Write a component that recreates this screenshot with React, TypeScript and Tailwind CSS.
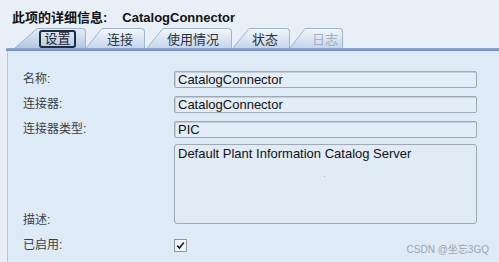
import React from 'react';

const cjk = { fontFamily: '"Liberation Sans", "Noto Sans CJK SC", sans-serif' };

type TabProps = {
  label: string;
  slope: number;
  body: number;
  pad: number;
  active?: boolean;
  disabled?: boolean;
  gap?: number;
};

function Slope({ w, active }: { w: number; active?: boolean }) {
  const id = active ? 'tabA' : 'tabI';
  return (
    <svg width={w} height="20" viewBox={`0 0 ${w} 20`} className="block shrink-0">
      <defs>
        <linearGradient id={id} x1="0" y1="0" x2="0" y2="1">
          <stop offset="0" stopColor={active ? '#e4edf7' : '#f2f6fb'} />
          <stop offset="1" stopColor={active ? '#b3c9e2' : '#c6d6e9'} />
        </linearGradient>
      </defs>
      <polygon points={`0,20 ${w},0 ${w},20`} fill={`url(#${id})`} />
      <line x1="0" y1="20" x2={w} y2="0.5" stroke="#9fb4cd" strokeWidth="1" />
    </svg>
  );
}

function Tab({ label, slope, body, pad, active, disabled, gap = 0 }: TabProps) {
  return (
    <div className="flex items-end" style={{ marginLeft: gap }}>
      <Slope w={slope} active={active} />
      <div
        className={
          'h-[20px] border-t border-r border-[#9fb4cd] rounded-tr-[4px] ' +
          (active
            ? 'bg-gradient-to-b from-[#e4edf7] to-[#b3c9e2]'
            : 'bg-gradient-to-b from-[#f2f6fb] to-[#c6d6e9]')
        }
        style={{ width: body }}
      >
        {active ? (
          <div className="mt-[1px] ml-[2px] w-[37px] h-[18px] border-2 border-[#1f2c3d] rounded-[3px] flex items-center justify-center text-[13px] leading-[14px] text-[#1b2330]">
            {label}
          </div>
        ) : (
          <div
            className={
              'pt-[3px] text-[13px] leading-[16px] ' +
              (disabled ? 'text-[#a3afbd]' : 'text-[#2b3442]')
            }
            style={{ paddingLeft: pad }}
          >
            {label}
          </div>
        )}
      </div>
    </div>
  );
}

function Field({ value }: { value: string }) {
  return (
    <div className="w-[303px] h-[17px] border border-[#9ea9b6] rounded-[2px] bg-[#e3edf7] shadow-[inset_1px_1px_0_#c4ced9] pl-[3px] text-[13px] leading-[15px] text-[#111]">
      {value}
    </div>
  );
}

export default function App() {
  return (
    <div className="w-[499px] h-[262px] overflow-hidden bg-[#e8eff7] flex flex-col" style={cjk}>
      <div className="pt-[10px] pl-[12px] text-[13px] leading-[16px] font-bold text-[#111]">
        此项的详细信息:<span className="ml-[15px]">CatalogConnector</span>
      </div>

      <div className="mt-[2px] pl-[15px] flex items-end h-[20px]">
        <Tab label="设置" slope={22} body={49} pad={0} active />
        <Tab label="连接" slope={16} body={43} pad={5} />
        <Tab label="使用情况" slope={16} body={69} pad={4} gap={2} />
        <Tab label="状态" slope={16} body={41} pad={3} gap={1} />
        <Tab label="日志" slope={15} body={38} pad={7} disabled />
      </div>

      <div className="ml-[6px] h-[3px] bg-gradient-to-b from-[#94addb] to-[#6d8fc2]" />

      <div className="ml-[7px] flex-1 border-l border-[#b6c7d9] bg-[#deeaf5] pl-[15px] pt-[20px] relative">
        <div className="flex flex-col gap-[8px]">
          <div className="flex items-center">
            <div className="w-[151px] text-[12px] leading-[17px] text-[#3a3f46]">名称:</div>
            <Field value="CatalogConnector" />
          </div>
          <div className="flex items-center">
            <div className="w-[151px] text-[12px] leading-[17px] text-[#3a3f46]">连接器:</div>
            <Field value="CatalogConnector" />
          </div>
          <div className="flex items-center">
            <div className="w-[151px] text-[12px] leading-[17px] text-[#3a3f46]">连接器类型:</div>
            <Field value="PIC" />
          </div>
        </div>

        <div className="mt-[6px] flex items-end">
          <div className="w-[151px] text-[12px] leading-[14px] mb-[-3px] text-[#3a3f46]">描述:</div>
          <div className="w-[303px] h-[80px] border border-[#9ea9b6] rounded-[3px] bg-[#e1ebf6] pl-[3px] pt-[1px] text-[13px] leading-[16px] text-[#111] relative">
            Default Plant Information Catalog Server
            <span className="absolute left-[149px] top-[31px] w-[1px] h-[1px] bg-[#aab4c0]" />
          </div>
        </div>

        <div className="mt-[15px] flex items-center">
          <div className="w-[151px] text-[12px] leading-[13px] text-[#3a3f46]">已启用:</div>
          <div className="w-[13px] h-[13px] border border-[#8c97a4] bg-[#f2f6fa] flex items-center justify-center">
            <svg width="9" height="9" viewBox="0 0 9 9">
              <path d="M1.2 4.6 L3.5 7 L7.8 1.5" fill="none" stroke="#1c1c1c" strokeWidth="1.6" />
            </svg>
          </div>
        </div>

        <div className="absolute right-[10px] bottom-[6px] text-[10px] leading-[12px] text-[#9aa6b2]">
          CSDN @坐忘3GQ
        </div>
      </div>
    </div>
  );
}
